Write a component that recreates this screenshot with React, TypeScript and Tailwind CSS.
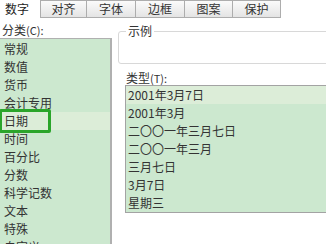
import React from "react";

const categories = [
  "常规",
  "数值",
  "货币",
  "会计专用",
  "日期",
  "时间",
  "百分比",
  "分数",
  "科学记数",
  "文本",
  "特殊",
  "自定义",
];

const types = [
  "2001年3月7日",
  "2001年3月",
  "二〇〇一年三月七日",
  "二〇〇一年三月",
  "三月七日",
  "3月7日",
  "星期三",
];

const tabs = [
  { label: "对齐", width: "w-[47px] border-l" },
  { label: "字体", width: "w-[49px]" },
  { label: "边框", width: "w-[49px]" },
  { label: "图案", width: "w-[48px]" },
  { label: "保护", width: "w-[48px]" },
];

export default function App() {
  return (
    <div
      className="relative w-[326px] h-[244px] overflow-hidden bg-white text-[12px] text-[#333]"
      style={{ fontFamily: '"Noto Sans CJK SC", "Noto Sans", sans-serif' }}
    >
      {/* Tab strip */}
      <div className="flex h-[18px]">
        <div className="w-[40px] h-[18px] bg-white pl-[5px] leading-[17px] text-[#222]">数字</div>
        {tabs.map((tab) => (
          <div
            key={tab.label}
            className={`${tab.width} h-[18px] border-t border-r border-b border-[#adadad] bg-gradient-to-b from-[#fbfbfb] to-[#e4e4e4] text-center leading-[16px]`}
          >
            {tab.label}
          </div>
        ))}
      </div>

      <div className="flex">
        {/* Category list */}
        <div className="w-[112px] shrink-0">
          <div className="h-[20px] pt-[4px] pl-[2px] leading-[16px]">
            分类<span className="text-[11px]">(C):</span>
          </div>
          <div className="h-[220px] border-t border-r-2 border-[#b0b0b0] bg-[#cce8cf] pt-[1px]">
            {categories.map((c) => (
              <div
                key={c}
                className={`h-[18px] pl-[4px] leading-[18px] ${c === "日期" ? "bg-[#dcedd8]" : ""}`}
              >
                {c}
              </div>
            ))}
          </div>
        </div>

        {/* Right side */}
        <div className="ml-[6px] w-[220px] shrink-0">
          <div className="relative mt-[13px] h-[33px] w-[230px] rounded-[3px] border border-[#d8d8d8]">
            <span className="absolute left-[7px] -top-[9px] bg-white px-[2px] leading-[16px]">示例</span>
          </div>
          <div className="h-[21px] pt-[6px] pl-[8px] leading-[16px]">
            类型<span className="text-[11px]">(T):</span>
          </div>
          <div className="ml-[7px] w-[220px] border border-[#a3a3a3] bg-[#cce8cf]">
            {types.map((t, i) => (
              <div
                key={t}
                className={`h-[18px] pl-[2px] leading-[18px] ${i === 0 ? "bg-[#dcedd8]" : ""}`}
              >
                {t}
              </div>
            ))}
          </div>
        </div>
      </div>

      {/* Highlight annotation around 日期 */}
      <div className="absolute left-[-1px] top-[109px] h-[24px] w-[52px] rounded-[2px] border-[3px] border-[#2aa52a]" />
    </div>
  );
}
